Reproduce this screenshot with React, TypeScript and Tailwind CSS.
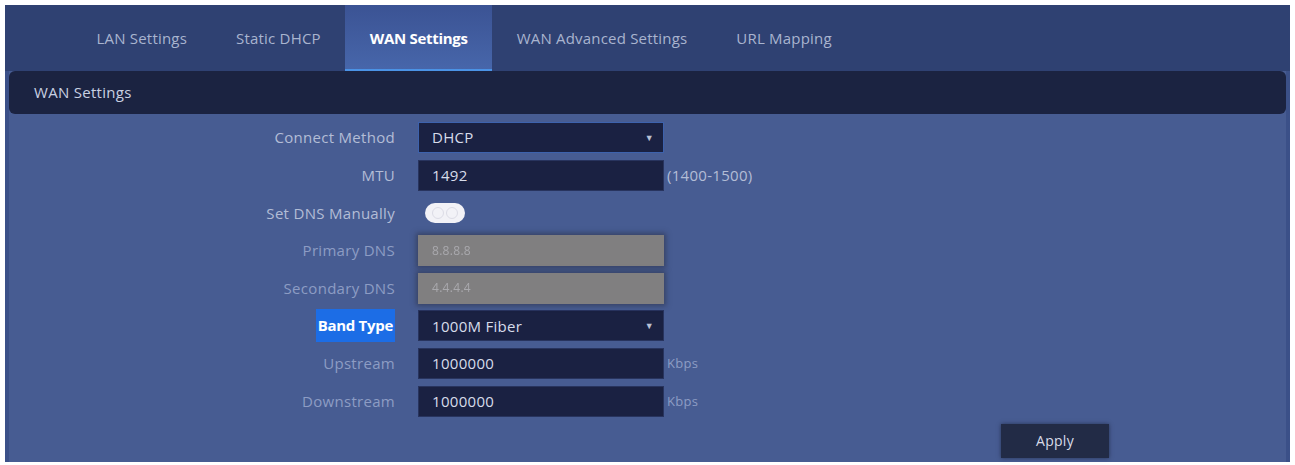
import React from "react";

const tabs = ["LAN Settings", "Static DHCP", "WAN Settings", "WAN Advanced Settings", "URL Mapping"];

function Label({ children, dim, active }: { children: React.ReactNode; dim?: boolean; active?: boolean }) {
  if (active) {
    return (
      <div className="flex justify-end">
        <span className="bg-[#1c6de6] text-white font-bold h-[33px] leading-[33px] px-[2px] -my-[1px] tracking-[-0.3px]">{children}</span>
      </div>
    );
  }
  return <div className={"text-right " + (dim ? "text-[#8d9cc4]" : "text-[#b3bdd6]")}>{children}</div>;
}

function Field({ children, className }: { children: React.ReactNode; className?: string }) {
  return (
    <div className={"h-[31px] w-[246px] flex items-center px-[13px] border " + (className ?? "bg-[#1a2142] border-[#28345e] text-[#d7dcea]")}>
      {children}
    </div>
  );
}

function Select({ value, focused }: { value: string; focused?: boolean }) {
  return (
    <Field className={"bg-[#1a2142] text-[#d7dcea] " + (focused ? "border-[#3d62ad]" : "border-[#28345e]")}>
      <span className="flex-1">{value}</span>
      <span className="text-[9px] text-[#b9c0d4] -mr-[4px]">▼</span>
    </Field>
  );
}

function Disabled({ value }: { value: string }) {
  return (
    <div className="h-[31px] w-[246px] flex items-center px-[14px] bg-[#807f80] shadow-[0_0_5px_2px_rgba(40,44,60,0.5)] text-[#a9a9ad] text-[12px] blur-[0.7px]">
      {value}
    </div>
  );
}

function Row({ label, children, suffix, dim, active }: { label: string; children: React.ReactNode; suffix?: string; dim?: boolean; active?: boolean }) {
  return (
    <div className="flex items-center h-[31px]">
      <div className="w-[386px]">
        <Label dim={dim} active={active}>{label}</Label>
      </div>
      <div className="ml-[23px]">{children}</div>
      {suffix && <span className={"ml-[3px] " + (dim ? "text-[#8d9cc4] text-[13px]" : "text-[#b3bdd6]")}>{suffix}</span>}
    </div>
  );
}

export default function App() {
  return (
    <div className="w-[1295px] h-[465px] bg-white pt-[5px] pl-[5px] pr-[5px] pb-[3px] font-['Open_Sans',sans-serif] text-[15px] tracking-[0.3px]">
      <div className="h-full flex flex-col bg-[#475c92] border-l-[4px] border-r-[4px] border-[#3b5088]">
        <div className="h-[66px] bg-[#2f4172] flex items-stretch -mx-[4px] pl-[67px]">
          {tabs.map((t) => {
            const active = t === "WAN Settings";
            return (
              <div
                key={t}
                className={
                  "px-[24.5px] flex items-center " +
                  (active
                    ? "bg-gradient-to-b from-[#3b5394] to-[#4766aa] border-b-[2px] border-[#4b93e6] text-white font-bold pt-[2px] tracking-[-0.3px]"
                    : "text-[#a9b4cf] tracking-[0.2px]")
                }
              >
                {t}
              </div>
            );
          })}
        </div>
        <div className="h-[43px] bg-[#1b2341] rounded-[6px] flex items-center pl-[25px] text-[#c9d0e2]">
          WAN Settings
        </div>
        <div className="flex-1 flex flex-col pt-[8px] gap-[6.7px]">
          <Row label="Connect Method">
            <Select value="DHCP" focused />
          </Row>
          <Row label="MTU" suffix="(1400-1500)">
            <Field>1492</Field>
          </Row>
          <Row label="Set DNS Manually">
            <div className="ml-[7px] w-[40px] h-[20px] rounded-full bg-[#f2f2f7] blur-[0.5px] flex items-center justify-center gap-[2px]">
              <span className="w-[12px] h-[12px] rounded-full border border-[#dcdce6]" />
              <span className="w-[12px] h-[12px] rounded-full border border-[#dcdce6]" />
            </div>
          </Row>
          <Row label="Primary DNS" dim>
            <Disabled value="8.8.8.8" />
          </Row>
          <Row label="Secondary DNS" dim>
            <Disabled value="4.4.4.4" />
          </Row>
          <Row label="Band Type" active>
            <Select value="1000M Fiber" />
          </Row>
          <Row label="Upstream" suffix="Kbps" dim>
            <Field>1000000</Field>
          </Row>
          <Row label="Downstream" suffix="Kbps" dim>
            <Field>1000000</Field>
          </Row>
          <div className="flex justify-end pr-[177px]">
            <button className="w-[108px] h-[34px] bg-[#222b46] text-[#d8dce8] text-[14px] shadow-[0_0_4px_rgba(20,25,45,0.6)]">
              Apply
            </button>
          </div>
        </div>
      </div>
    </div>
  );
}
